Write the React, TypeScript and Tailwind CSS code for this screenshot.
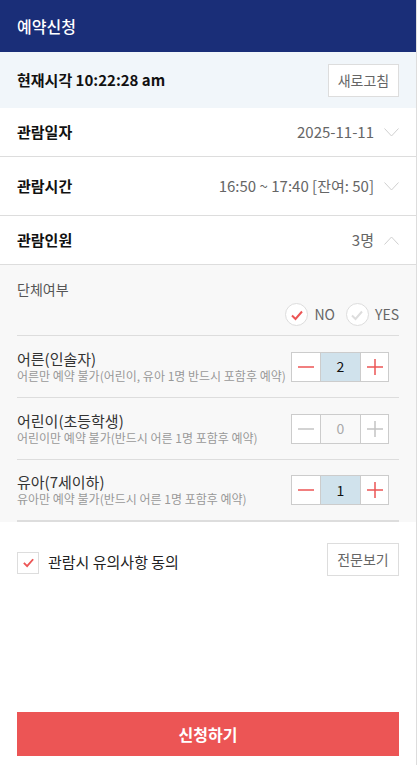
import React from "react";

const Chevron = ({ up = false }: { up?: boolean }) => (
  <svg width="15" height="9" viewBox="0 0 15 9" className="shrink-0">
    <path
      d={up ? "M0.5 8.5 L7.5 1 L14.5 8.5" : "M0.5 0.5 L7.5 8 L14.5 0.5"}
      fill="none"
      stroke="#cfcfcf"
      strokeWidth="1"
    />
  </svg>
);

const Check = ({ color, size = 14 }: { color: string; size?: number }) => (
  <svg width={size} height={size} viewBox="0 0 14 14">
    <path d="M2 7.5 L5.5 11 L12 3.5" fill="none" stroke={color} strokeWidth="2" />
  </svg>
);

const InfoRow = ({
  label,
  value,
  up,
  h,
}: {
  label: string;
  value: string;
  up?: boolean;
  h: string;
}) => (
  <div className={`flex items-center justify-between px-[17px] border-b border-[#dddddd] ${h}`}>
    <span className="text-[15px] font-bold text-[#111]">{label}</span>
    <div className="flex items-center gap-[10px]">
      <span className="text-[15px] text-[#666]">{value}</span>
      <Chevron up={up} />
    </div>
  </div>
);

const Stepper = ({ value, disabled }: { value: number; disabled?: boolean }) => {
  const line = disabled ? "#c4c4c4" : "#ec5555";
  return (
    <div className="flex h-[30px] border border-[#cccccc] bg-white shrink-0">
      <div className="w-[28px] flex items-center justify-center">
        <svg width="16" height="16" viewBox="0 0 16 16">
          <path d="M0 8 H16" stroke={line} strokeWidth="1.5" />
        </svg>
      </div>
      <div
        className={`w-[41px] flex items-center justify-center border-x border-[#cccccc] text-[14px] ${
          disabled ? "bg-[#f9f9f9] text-[#aaa]" : "bg-[#d0e2ec] text-[#111]"
        }`}
      >
        {value}
      </div>
      <div className="w-[27px] flex items-center justify-center">
        <svg width="16" height="16" viewBox="0 0 16 16">
          <path d="M0 8 H16 M8 0 V16" stroke={line} strokeWidth="1.5" />
        </svg>
      </div>
    </div>
  );
};

const PersonRow = ({
  title,
  sub,
  value,
  disabled,
  last,
}: {
  title: string;
  sub: string;
  value: number;
  disabled?: boolean;
  last?: boolean;
}) => (
  <div
    className={`flex items-center justify-between h-[62px] pr-[10px] ${
      last ? "border-b-2 border-[#dddddd]" : "border-b border-[#dddddd]"
    }`}
  >
    <div className="flex flex-col leading-[17px] whitespace-nowrap">
      <span className="text-[15px] text-[#333]">{title}</span>
      <span className="text-[12px] text-[#999]">{sub}</span>
    </div>
    <Stepper value={value} disabled={disabled} />
  </div>
);

export default function App() {
  return (
    <div className="w-[417px] min-h-screen flex flex-col bg-white border-r border-[#dddddd] font-['Noto_Sans_CJK_KR','Noto_Sans',sans-serif]">
      <header className="h-[52px] bg-[#1a2e78] flex items-center px-[17px] pb-[1px]">
        <h1 className="text-[16px] font-medium text-white">예약신청</h1>
      </header>

      <div className="h-[56px] bg-[#f1f6fa] flex items-center justify-between px-[17px]">
        <span className="text-[15px] font-bold text-[#111]">현재시각 10:22:28 am</span>
        <button className="w-[71px] h-[33px] bg-white border border-[#dddddd] text-[14px] text-[#666]">
          새로고침
        </button>
      </div>

      <InfoRow label="관람일자" value="2025-11-11" h="h-[49px]" />
      <InfoRow label="관람시간" value="16:50 ~ 17:40 [잔여: 50]" h="h-[59px]" />
      <InfoRow label="관람인원" value="3명" up h="h-[49px]" />

      <div className="bg-[#f8f8f8] px-[17px]">
        <div className="h-[71px] border-b border-[#dddddd] pt-[14px]">
          <div className="text-[14px] text-[#555] leading-[20px]">단체여부</div>
          <div className="flex justify-end items-center gap-[6px] mt-[4px]">
            <span className="w-[23px] h-[23px] rounded-full bg-white border border-[#dddddd] flex items-center justify-center">
              <Check color="#ec5555" />
            </span>
            <span className="text-[14px] text-[#666] mr-[5px]">NO</span>
            <span className="w-[23px] h-[23px] rounded-full bg-white border border-[#dddddd] flex items-center justify-center">
              <Check color="#dddddd" />
            </span>
            <span className="text-[14px] text-[#666]">YES</span>
          </div>
        </div>
        <PersonRow title="어른(인솔자)" sub="어른만 예약 불가(어린이, 유아 1명 반드시 포함후 예약)" value={2} />
        <PersonRow title="어린이(초등학생)" sub="어린이만 예약 불가(반드시 어른 1명 포함후 예약)" value={0} disabled />
        <PersonRow title="유아(7세이하)" sub="유아만 예약 불가(반드시 어른 1명 포함후 예약)" value={1} last />
      </div>

      <div className="flex items-center justify-between px-[17px] pt-[21px]">
        <div className="flex items-center gap-[9px] mt-[6px]">
          <span className="w-[22px] h-[22px] border border-[#dddddd] bg-white flex items-center justify-center">
            <Check color="#ec5555" size={13} />
          </span>
          <span className="text-[15px] text-[#222]">관람시 유의사항 동의</span>
        </div>
        <button className="w-[72px] h-[33px] bg-white border border-[#dddddd] text-[14px] text-[#666]">
          전문보기
        </button>
      </div>

      <div className="mt-auto px-[17px] pb-[9px]">
        <button className="w-full h-[44px] bg-[#ec5555] text-white text-[16px] font-bold">
          신청하기
        </button>
      </div>
    </div>
  );
}
